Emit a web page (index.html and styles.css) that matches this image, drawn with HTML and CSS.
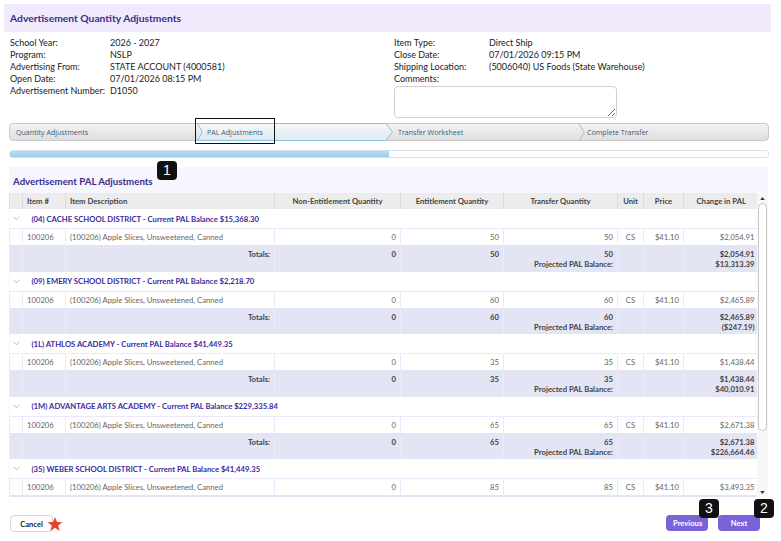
FILE: index.html
```html
<!DOCTYPE html>
<html lang="en">
<head>
  <meta charset="UTF-8" />
  <title>Advertisement Quantity Adjustments</title>
  <link rel="stylesheet" href="styles.css">
</head>
<body>
<div class="page">

  <header class="title-bar">
    <h1>Advertisement Quantity Adjustments</h1>
  </header>

  <div class="info">
    <div class="info-col left">
      <span class="lbl">School Year:</span><span>2026 - 2027</span>
      <span class="lbl">Program:</span><span>NSLP</span>
      <span class="lbl">Advertising From:</span><span>STATE ACCOUNT (4000581)</span>
      <span class="lbl">Open Date:</span><span>07/01/2026 08:15 PM</span>
      <span class="lbl">Advertisement Number:</span><span>D1050</span>
    </div>
    <div class="info-col right">
      <span class="lbl">Item Type:</span><span>Direct Ship</span>
      <span class="lbl">Close Date:</span><span>07/01/2026 09:15 PM</span>
      <span class="lbl">Shipping Location:</span><span>(5006040) US Foods (State Warehouse)</span>
      <span class="lbl">Comments:</span><span></span>
      <textarea class="comments"></textarea>
    </div>
  </div>

  <nav class="wizard">
    <div class="step first">Quantity Adjustments</div>
    <div class="step active">
      <svg class="step-shape" viewBox="0 0 196 18" preserveAspectRatio="none">
        <defs>
          <linearGradient id="act" x1="0" y1="0" x2="0" y2="1">
            <stop offset="0" stop-color="#f4f8fb"/>
            <stop offset="1" stop-color="#dfe9f0"/>
          </linearGradient>
        </defs>
        <polygon points="0.5,0.5 189,0.5 195.5,9 189,17.5 0.5,17.5 5.5,9" fill="url(#act)" stroke="#86c3e3" stroke-width="1"/>
      </svg>
      <span class="step-text">PAL Adjustments</span>
      <span class="focus-box"></span>
    </div>
    <div class="step third">
      <span class="step-text">Transfer Worksheet</span>
    </div>
    <div class="step last">
      <svg class="chev" viewBox="0 0 8 18"><polyline points="1,0 6.5,9 1,18" fill="none" stroke="#b9b9b9" stroke-width="1"/></svg>
      <span class="step-text">Complete Transfer</span>
    </div>
  </nav>

  <div class="progress"><div class="progress-fill"></div></div>

  <section class="pal">
    <h2>Advertisement PAL Adjustments <span class="badge badge-1">1</span></h2>
    <div class="grid-wrap">
      <div class="grid-scroll">
        <table class="grid">
          <colgroup>
            <col style="width:13px"><col style="width:43px"><col style="width:209px">
            <col style="width:126px"><col style="width:103px"><col style="width:114px">
            <col style="width:26px"><col style="width:40px"><col style="width:75px">
          </colgroup>
          <thead>
            <tr>
              <th></th><th class="l">Item #</th><th class="l">Item Description</th>
              <th>Non-Entitlement Quantity</th><th>Entitlement Quantity</th><th>Transfer Quantity</th>
              <th>Unit</th><th>Price</th><th>Change in PAL</th>
            </tr>
          </thead>
          <tbody>
            <tr class="group"><td class="exp"><svg viewBox="0 0 8 5"><polyline points="0.5,0.5 4,4 7.5,0.5" fill="none" stroke="#9a9a9a" stroke-width="0.8"/></svg></td><td colspan="8">(04) CACHE SCHOOL DISTRICT - Current PAL Balance $15,368.30</td></tr>
            <tr class="item"><td></td><td>100206</td><td>(100206) Apple Slices, Unsweetened, Canned</td><td class="n">0</td><td class="n">50</td><td class="n">50</td><td class="c">CS</td><td class="n">$41.10</td><td class="n">$2,054.91</td></tr>
            <tr class="totals"><td></td><td></td><td class="n">Totals:</td><td class="n">0</td><td class="n">50</td><td class="n">50<br>Projected PAL Balance:</td><td></td><td></td><td class="n">$2,054.91<br>$13,313.39</td></tr>

            <tr class="group"><td class="exp"><svg viewBox="0 0 8 5"><polyline points="0.5,0.5 4,4 7.5,0.5" fill="none" stroke="#9a9a9a" stroke-width="0.8"/></svg></td><td colspan="8">(09) EMERY SCHOOL DISTRICT - Current PAL Balance $2,218.70</td></tr>
            <tr class="item"><td></td><td>100206</td><td>(100206) Apple Slices, Unsweetened, Canned</td><td class="n">0</td><td class="n">60</td><td class="n">60</td><td class="c">CS</td><td class="n">$41.10</td><td class="n">$2,465.89</td></tr>
            <tr class="totals"><td></td><td></td><td class="n">Totals:</td><td class="n">0</td><td class="n">60</td><td class="n">60<br>Projected PAL Balance:</td><td></td><td></td><td class="n">$2,465.89<br>($247.19)</td></tr>

            <tr class="group"><td class="exp"><svg viewBox="0 0 8 5"><polyline points="0.5,0.5 4,4 7.5,0.5" fill="none" stroke="#9a9a9a" stroke-width="0.8"/></svg></td><td colspan="8">(1L) ATHLOS ACADEMY - Current PAL Balance $41,449.35</td></tr>
            <tr class="item"><td></td><td>100206</td><td>(100206) Apple Slices, Unsweetened, Canned</td><td class="n">0</td><td class="n">35</td><td class="n">35</td><td class="c">CS</td><td class="n">$41.10</td><td class="n">$1,438.44</td></tr>
            <tr class="totals"><td></td><td></td><td class="n">Totals:</td><td class="n">0</td><td class="n">35</td><td class="n">35<br>Projected PAL Balance:</td><td></td><td></td><td class="n">$1,438.44<br>$40,010.91</td></tr>

            <tr class="group"><td class="exp"><svg viewBox="0 0 8 5"><polyline points="0.5,0.5 4,4 7.5,0.5" fill="none" stroke="#9a9a9a" stroke-width="0.8"/></svg></td><td colspan="8">(1M) ADVANTAGE ARTS ACADEMY - Current PAL Balance $229,335.84</td></tr>
            <tr class="item"><td></td><td>100206</td><td>(100206) Apple Slices, Unsweetened, Canned</td><td class="n">0</td><td class="n">65</td><td class="n">65</td><td class="c">CS</td><td class="n">$41.10</td><td class="n">$2,671.38</td></tr>
            <tr class="totals"><td></td><td></td><td class="n">Totals:</td><td class="n">0</td><td class="n">65</td><td class="n">65<br>Projected PAL Balance:</td><td></td><td></td><td class="n">$2,671.38<br>$226,664.46</td></tr>

            <tr class="group"><td class="exp"><svg viewBox="0 0 8 5"><polyline points="0.5,0.5 4,4 7.5,0.5" fill="none" stroke="#9a9a9a" stroke-width="0.8"/></svg></td><td colspan="8">(35) WEBER SCHOOL DISTRICT - Current PAL Balance $41,449.35</td></tr>
            <tr class="item"><td></td><td>100206</td><td>(100206) Apple Slices, Unsweetened, Canned</td><td class="n">0</td><td class="n">85</td><td class="n">85</td><td class="c">CS</td><td class="n">$41.10</td><td class="n">$3,493.35</td></tr>
            <tr class="totals"><td></td><td></td><td></td><td></td><td></td><td></td><td></td><td></td><td></td></tr>
          </tbody>
        </table>
      </div>
      <div class="scrollbar">
        <div class="sb-btn"><svg viewBox="0 0 6 4"><polygon points="0,4 3,0 6,4" fill="#333"/></svg></div>
        <div class="sb-track"><div class="sb-thumb"></div></div>
        <div class="sb-btn"><svg viewBox="0 0 6 4"><polygon points="0,0 6,0 3,4" fill="#333"/></svg></div>
      </div>
    </div>
  </section>

  <footer class="actions">
    <div class="left-actions">
      <button class="btn btn-light">Cancel</button>
      <svg class="star" viewBox="0 0 24 24"><polygon points="12,1.5 15,9 23,9.3 16.8,14.3 19,22.5 12,17.8 5,22.5 7.2,14.3 1,9.3 9,9" fill="#e2452c"/></svg>
    </div>
    <div class="right-actions">
      <button class="btn btn-primary">Previous<span class="badge badge-3">3</span></button>
      <button class="btn btn-primary">Next<span class="badge badge-2">2</span></button>
    </div>
  </footer>

</div>
</body>
</html>
```

FILE: styles.css
```css
body {
  margin: 0;
  font-family: Lato, "Open Sans", sans-serif;
  color: #222;
  background: #fff;
}

.page {
  width: 781px;
  height: 541px;
  position: relative;
  overflow: hidden;
}

.title-bar {
  margin: 4px 10px 0 4px;
  height: 28px;
  background: #f1eafd;
  display: flex;
  align-items: center;
  padding-left: 6px;
}

.title-bar h1 {
  margin: 0;
  font-size: 10.3px;
  font-weight: 700;
  color: #3a2d8c;
}

.info {
  display: flex;
  padding: 5px 0 0 10px;
  height: 86px;
  font-size: 9px;
  line-height: 12px;
}

.info-col {
  display: grid;
  align-content: start;
}

.info-col.left {
  width: 384px;
  grid-template-columns: 100px 1fr;
}

.info-col.right {
  grid-template-columns: 95px 1fr;
}

.comments {
  grid-column: 1 / 3;
  width: 223px;
  height: 32px;
  box-sizing: border-box;
  margin-top: 1px;
  border: 1px solid #cfcfcf;
  border-radius: 4px;
  resize: vertical;
}

.wizard {
  margin: 0 12px 0 9px;
  height: 18px;
  display: flex;
  background: linear-gradient(#f3f3f3, #dedede);
  border: 1px solid #c9c9c9;
  border-radius: 4px;
  box-sizing: border-box;
  font-family: "Open Sans", sans-serif;
  font-size: 7.1px;
  color: #3f5b7a;
}

.step {
  position: relative;
  display: flex;
  align-items: center;
  flex-shrink: 0;
}

.step.first {
  width: 187px;
  padding-left: 6px;
  box-sizing: border-box;
}

.step.active {
  width: 193px;
}

.step.third {
  width: 188px;
}

.step.last {
  flex: 1;
}

.step .chev {
  width: 8px;
  height: 17px;
  flex-shrink: 0;
}

.step-text {
  position: relative;
}

.step.active .step-text {
  margin-left: 10px;
}

.step.third .step-text {
  margin-left: 8px;
}

.step.last .step-text {
  margin-left: 1px;
}

.step-shape {
  position: absolute;
  left: 0;
  top: -1px;
  width: 196px;
  height: 18px;
}

.focus-box {
  position: absolute;
  left: -2px;
  top: -6px;
  width: 78px;
  height: 24px;
  border: 1.5px solid #111;
}

.progress {
  margin: 9px 12px 0 9px;
  height: 8px;
  border: 1px solid #d2e2ec;
  border-radius: 3px;
  background: #fff;
  box-sizing: border-box;
  overflow: hidden;
}

.progress-fill {
  width: 50%;
  height: 100%;
  background: linear-gradient(#b8dcf4, #9ccdee);
}

.pal {
  margin: 9px 13px 0 9px;
  background: #f7f5fe;
}

.pal h2 {
  position: relative;
  margin: 0;
  padding: 8px 0 0 4px;
  height: 18px;
  font-size: 9.7px;
  font-weight: 700;
  color: #3a2d8c;
}

.badge {
  position: absolute;
  width: 20px;
  height: 19px;
  border-radius: 4px;
  background: #111;
  color: #fff;
  font-family: "Liberation Sans", Arial, sans-serif;
  font-size: 14px;
  font-weight: 400;
  line-height: 19px;
  text-align: center;
}

.badge-1 {
  left: 148px;
  top: -6px;
}

.grid-wrap {
  display: flex;
  height: 304px;
}

.grid-scroll {
  width: 749px;
  overflow: hidden;
}

.grid {
  width: 749px;
  table-layout: fixed;
  border-collapse: collapse;
  font-size: 7.7px;
  color: #666;
}

.grid th {
  height: 16px;
  padding: 0 4px;
  background: #ececec;
  border-left: 1px solid #dcdcdc;
  font-weight: 700;
  color: #444;
  text-align: center;
  white-space: nowrap;
}

.grid th.l {
  text-align: left;
}

.grid td {
  padding: 0 4px;
  border-left: 1px solid #ede7fb;
  white-space: nowrap;
  overflow: hidden;
}

.grid td.n {
  text-align: right;
}

.grid td.c {
  text-align: center;
}

.grid tr.group td {
  height: 19px;
  background: #fff;
  border-left: none;
  font-weight: 700;
  color: #3b2ba0;
  padding-left: 9px;
}

.grid td.exp {
  padding: 0 0 0 3px !important;
}

.grid td.exp svg {
  width: 7px;
  height: 5px;
  display: block;
}

.grid tr.item td {
  height: 16px;
  background: #fff;
  border-top: 1px solid #ede7fb;
}

.grid tr.totals td {
  height: 26.5px;
  vertical-align: top;
  padding-top: 4px;
  box-sizing: border-box;
  background: #e3e5f5;
  border-left-color: #eeeaf9;
  font-weight: 700;
  color: #444;
  line-height: 10px;
}

.scrollbar {
  width: 11px;
  display: flex;
  flex-direction: column;
  background: #f7f7f7;
}

.sb-btn {
  height: 10px;
  display: flex;
  align-items: center;
  justify-content: center;
}

.sb-btn svg {
  width: 5px;
  height: 3px;
}

.sb-track {
  flex: 1;
  padding: 0 1px;
}

.sb-thumb {
  height: 226px;
  border: 1px solid #c8c8c8;
  border-radius: 5px;
  background: #fff;
}

.actions {
  display: flex;
  justify-content: space-between;
  margin: 18px 21px 0 10px;
}

.left-actions {
  display: flex;
  align-items: center;
}

.right-actions {
  display: flex;
  gap: 10px;
}

.btn {
  position: relative;
  height: 17px;
  padding: 0 7px;
  border-radius: 4px;
  font-family: Lato, sans-serif;
  font-size: 7.6px;
  font-weight: 700;
  cursor: pointer;
}

.btn-light {
  width: 43px;
  background: #fff;
  border: 1px solid #d8d8d8;
  color: #222;
}

.btn-primary {
  height: 16px;
  width: 42px;
  background: #7c62d9;
  border: none;
  color: #fff;
}

.star {
  position: relative;
  z-index: 1;
  width: 16px;
  height: 16px;
  margin-left: -6px;
}

.badge-3 {
  left: 33px;
  top: -16px;
}

.badge-2 {
  left: 36px;
  top: -16px;
}
```
